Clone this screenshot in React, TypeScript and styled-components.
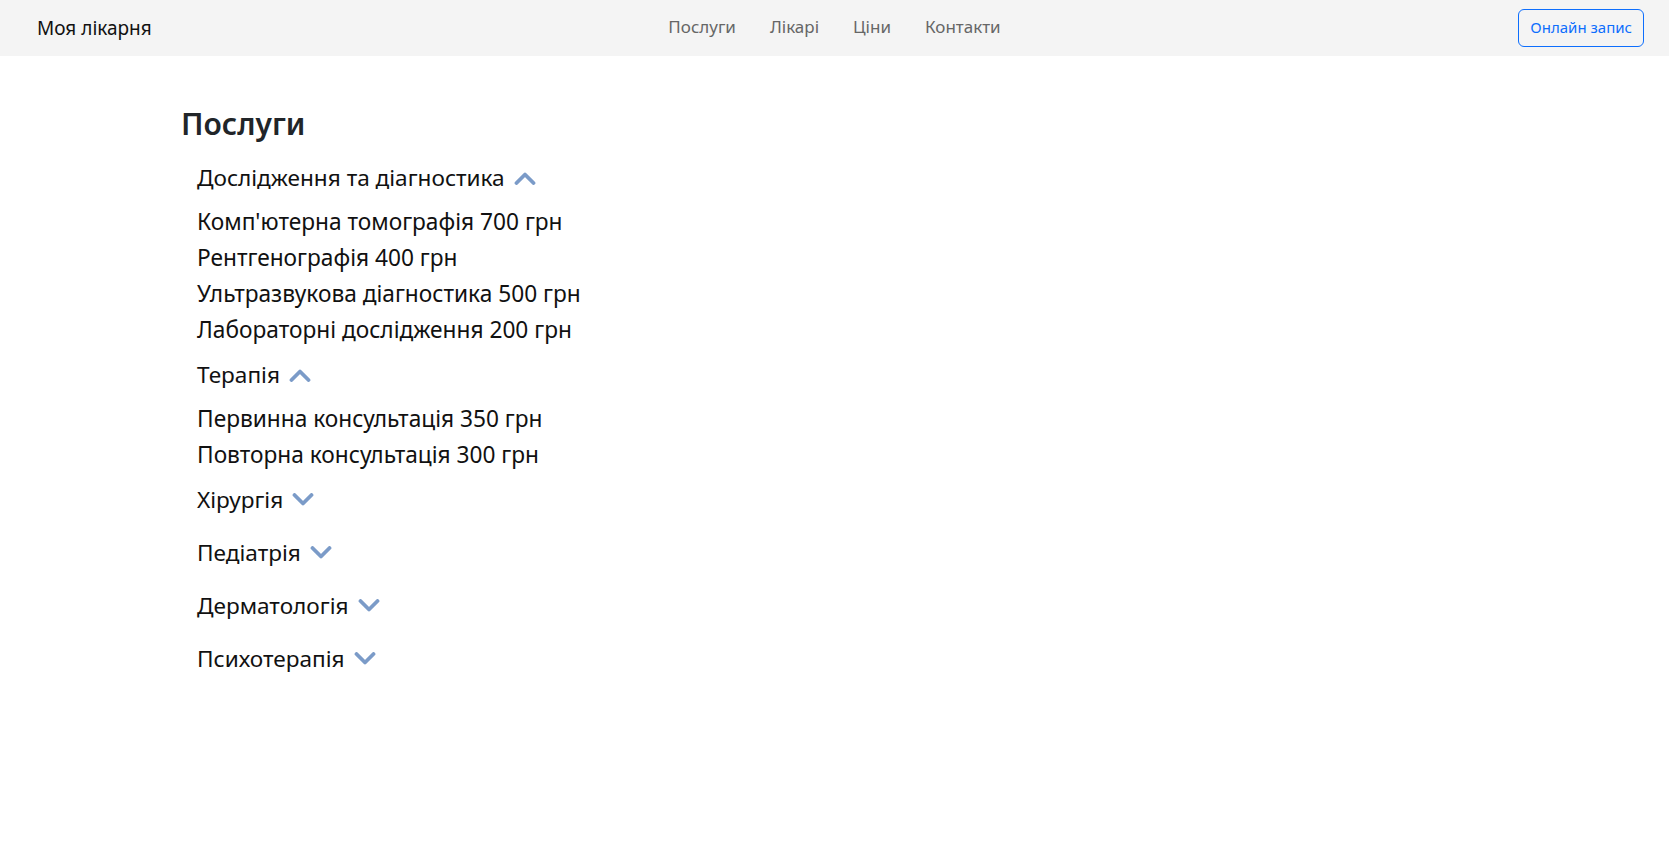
import React, { useState } from "react";
import styled, { createGlobalStyle } from "styled-components";

const Global = createGlobalStyle`
  html, body { margin: 0; padding: 0; background: #fff; }
  body { font-family: "Noto Sans", "Open Sans", sans-serif; color: #212529; }
  * { box-sizing: border-box; }
`;

const NavBar = styled.header`
  height: 56px;
  background: #f4f4f4;
  display: grid;
  grid-template-columns: 1fr auto 1fr;
  align-items: center;
  padding: 0 25px;
`;

const Brand = styled.a`
  font-size: 19px;
  color: #111;
  text-decoration: none;
  justify-self: start;
  padding-left: 12px;
`;

const NavLinks = styled.nav`
  display: flex;
  gap: 0;
`;

const NavLink = styled.a`
  font-size: 17px;
  color: #666;
  text-decoration: none;
  padding: 6px 17px 10px;
`;

const BookButton = styled.button`
  justify-self: end;
  font-family: inherit;
  font-size: 15px;
  line-height: 24px;
  color: #0d6efd;
  background: transparent;
  border: 1px solid #0d6efd;
  border-radius: 6px;
  padding: 5px 11px 7px;
  cursor: pointer;
`;

const Main = styled.main`
  padding: 49px 0 0 181px;
`;

const Title = styled.h2`
  margin: 0 0 8px;
  font-size: 30px;
  line-height: 38px;
  font-weight: 600;
  color: #212529;
`;

const CategoryList = styled.div`
  display: flex;
  flex-direction: column;
  padding-left: 16px;
`;

const CategoryHeader = styled.button`
  display: flex;
  align-items: center;
  gap: 9px;
  height: 53px;
  padding: 0;
  border: 0;
  background: none;
  font-family: inherit;
  font-size: 22.6px;
  color: #111;
  cursor: pointer;
  text-align: left;
`;

const Items = styled.ul`
  list-style: none;
  margin: 0;
  padding: 0;
`;

const Item = styled.li`
  font-size: 22.7px;
  line-height: 36px;
  color: #111;
`;

const Chevron = ({ up }: { up: boolean }) => (
  <svg width="22" height="14" viewBox="0 0 22 14" aria-hidden="true">
    <polyline
      points={up ? "2.5,12 11,3.5 19.5,12" : "2.5,2 11,10.5 19.5,2"}
      fill="none"
      stroke="#7b9bc8"
      strokeWidth="3.8"
      strokeLinecap="round"
      strokeLinejoin="round"
    />
  </svg>
);

type Category = { name: string; items: string[]; open: boolean };

const data: Category[] = [
  {
    name: "Дослідження та діагностика",
    open: true,
    items: [
      "Комп'ютерна томографія 700 грн",
      "Рентгенографія 400 грн",
      "Ультразвукова діагностика 500 грн",
      "Лабораторні дослідження 200 грн",
    ],
  },
  {
    name: "Терапія",
    open: true,
    items: ["Первинна консультація 350 грн", "Повторна консультація 300 грн"],
  },
  { name: "Хірургія", open: false, items: [] },
  { name: "Педіатрія", open: false, items: [] },
  { name: "Дерматологія", open: false, items: [] },
  { name: "Психотерапія", open: false, items: [] },
];

const CategoryBlock = ({ cat }: { cat: Category }) => {
  const [open, setOpen] = useState(cat.open);
  return (
    <div>
      <CategoryHeader onClick={() => setOpen(!open)}>
        <span>{cat.name}</span>
        <Chevron up={open} />
      </CategoryHeader>
      {open && (
        <Items>
          {cat.items.map((it) => (
            <Item key={it}>{it}</Item>
          ))}
        </Items>
      )}
    </div>
  );
};

export default function App() {
  return (
    <>
      <Global />
      <NavBar>
        <Brand href="#">Моя лікарня</Brand>
        <NavLinks>
          <NavLink href="#">Послуги</NavLink>
          <NavLink href="#">Лікарі</NavLink>
          <NavLink href="#">Ціни</NavLink>
          <NavLink href="#">Контакти</NavLink>
        </NavLinks>
        <BookButton>Онлайн запис</BookButton>
      </NavBar>
      <Main>
        <Title>Послуги</Title>
        <CategoryList>
          {data.map((c) => (
            <CategoryBlock key={c.name} cat={c} />
          ))}
        </CategoryList>
      </Main>
    </>
  );
}
